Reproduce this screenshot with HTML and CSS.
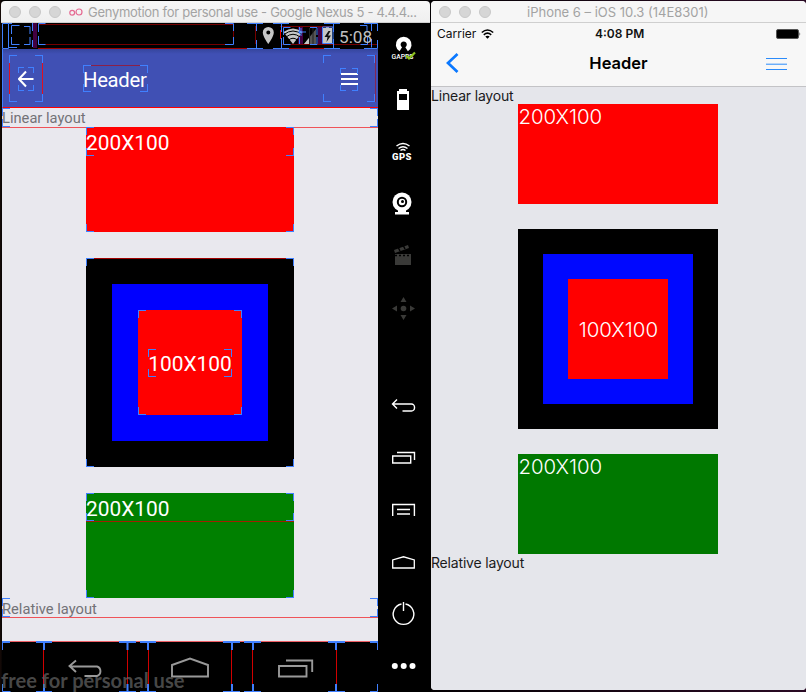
FILE: index.html
```html
<!DOCTYPE html>
<html lang="en">
<head>
<meta charset="utf-8">
<title>Layout comparison</title>
<link rel="stylesheet" href="styles.css">
</head>
<body>
<div class="desktop">
  <section class="window android">
    <header class="titlebar">
      <span class="light"></span><span class="light"></span><span class="light"></span>
      <svg class="geny" width="14" height="16" viewBox="0 0 14 16"><g fill="none" stroke="#e56a92" stroke-width="1.2"><circle cx="3.2" cy="8.8" r="2.4"/><circle cx="10" cy="8" r="3"/></g></svg>
      <span class="caption">Genymotion for personal use - Google Nexus 5 - 4.4.4...</span>
    </header>
    <div class="device">
      <div class="screen">
        <div class="a-status">
          <svg width="376" height="26" viewBox="2 23 376 26">
            <path fill="#420042" d="M33 23h4v25h-4zM298 27h5v17h-5zM318 27h5v17h-5z"/>
            <path fill="#c6c6c6" d="M268.300 27a5.500 5.500 0 0 0-5.500 5.500c0 4.200 5.500 11.500 5.500 11.500s5.500-7.300 5.500-11.500a5.500 5.500 0 0 0-5.500-5.500zm0 3.500a2 2 0 1 1 0 4 2 2 0 0 1 0-4z" fill-rule="evenodd"/>
            <path fill="#c6c6c6" d="M283.500 32q9.500-7 19 0L293 44z"/>
            <g fill="none" stroke="#000"><path d="M284 34.500q9-7 18 0M286 37q7-5.500 14 0M288.500 40q4.500-3.500 9 0"/></g>
            <path fill="#555" d="M304 44l12-15v15z"/><path fill="#c6c6c6" d="M304 44l5-6v6z"/><path stroke="#222" d="M309.500 28v16M313 28v16"/>
            <path fill="#c6c6c6" d="M323 28h3v-1h3v1h3v16h-9z"/><path fill="#111" d="M328.500 31l-4 6h3l-1 5 4.500-6.500h-3l2.500-4.500z"/>
            <g fill="none" stroke="#740000"><path d="M38 24.500h195M38 44.500h195M233.500 25v19M280 26.500h52M255.500 26v18M281 44.500h96"/></g>
            <path d="M8.500 31v9M280.500 30v9" stroke="#e00" fill="none"/>
            <path stroke="#4080ff" fill="none" d="M2.500 23.500h6v25h-6zM9 23.500h3M9 47.500h8M11.500 34v-8.500h8M24 26.500h6V34M11.500 37v7.500h8M24 44.500h6V37M32.500 23v8M32.500 40v7M38.500 32v-8.500h7M38.500 36v8.500h7M225 23.500h8.500V31M225 44.500h8.500V37M247 23.500h16M256.500 23v8M256.500 40v8M247 48.500h16M273 23.500h16M281.500 23v9M281.500 38v10M273 48.500h16M283.500 35v-7.500h7M283.500 37v7.500h7M299.500 27v7M299.500 37v7M310 27.500h7V35M310 44.500h7V37M322.500 27h10.500v16.500h-10.500zM324 23.500h16M333.500 23v9M333.500 39v9M324 48.500h16M360 25.500h7V31M367.500 36v8.500h-7M364 23.500h13.500V31M371.500 23v8M371.500 39v8.500M364 48.500h13.500V40M298 32h8M301 28v8"/>
            <path stroke="#a00000" d="M38 48.500h209M289 48.500h35"/>
          </svg>
          <span class="a-clock">5:08</span>
        </div>
        <div class="a-bar">
          <div class="bounds a-back"><svg width="16" height="25" viewBox="0 0 16 25"><path d="M15.500 13H1.500M8 5.500L1 13 8 20.500" fill="none" stroke="#fff" stroke-width="2"/></svg><i class="glyph-bounds"></i></div>
          <div class="bounds a-title">Header</div>
          <div class="bounds a-menu"><i class="glyph-bounds"></i><svg width="17" height="14" viewBox="0 0 17 14"><path d="M0 3h17M0 8h17M0 13h17" stroke="#fff" stroke-width="2"/></svg></div>
        </div>
        <div class="a-label first bounds">Linear layout</div>
        <div class="bounds a-box red"><span class="bounds a-text">200X100</span></div>
        <div class="bounds a-box a-nest"><div class="a-blue"><div class="bounds a-red"><span class="bounds">100X100</span></div></div></div>
        <div class="bounds a-box green"><span class="bounds a-text">200X100</span></div>
        <div class="a-label bounds">Relative layout</div>
        <div class="a-rest"></div>
        <div class="a-nav">
          <svg width="376" height="51" viewBox="2 641 376 51">
            <path d="M2 641.500h376" stroke="#ef5f65"/>
            <path stroke="#d00000" d="M43.500 650v34M127.500 650v34M148.500 650v34M231.500 650v34M252.500 650v34M336.500 650v34"/>
            <g fill="none" stroke="#999" stroke-width="1.900"><path d="M76 660.500l-6.500 5.500 6.500 6M70 666.500h27a5 5 0 0 1 0 9.500H84.500"/><path d="M172 676.500V665l18-6.500 18 6.500v11.500z"/><path d="M279 666h27.500v10.500H279zM286 660.500h26.200v11.500"/></g>
            <g fill="none" stroke="#4080ff" stroke-width="2"><path d="M2 642h8M36 642h16M119 642h17M140 642h16M223 642h17M244 642h17M328 642h17M370 642h8M44 642v8M127.500 642v8M148 642v8M232 642v8M253 642v8M336 642v8M44 684v8M127.500 684v8M148 684v8M232 684v8M253 684v8M336 684v8"/><path stroke-width="1" d="M2.500 634v16M2.500 684v7.500h8M36 691.500h16M119 691.500h17M140 691.500h16M223 691.500h17M244 691.500h17M328 691.500h17M370 691.500h7.500V684M377.500 642v8"/></g>
          </svg>
          <span class="watermark">free for personal use</span>
        </div>
      </div>
      <nav class="tools">
        <span><svg viewBox="0 0 36 36"><path d="M15.800 18.200a5.500 5.500 0 1 1 5.800 0" fill="none" stroke="#fff" stroke-width="4.800"/><text class="gapps" x="6.500" y="27.500" textLength="22" lengthAdjust="spacingAndGlyphs">GAPPS</text><path d="M21 24.500l3 3 6-6" fill="none" stroke="#8ec41f" stroke-width="2.200"/></svg></span>
        <span><svg viewBox="0 0 36 36"><path fill="#fff" d="M14 6h8v2h2v19H12V8h2z"/><path d="M14 11h8v6h-8z"/></svg></span>
        <span><svg viewBox="0 0 36 36"><path d="M11.500 11q6.500-5 13 0M13.500 13.500q4.500-3.500 9 0M15.500 15.500q2.500-2 5 0" fill="none" stroke="#fff" stroke-width="1.500"/><text class="gps" x="7" y="24.500" textLength="19.500">GPS</text></svg></span>
        <span><svg viewBox="0 0 36 36"><circle cx="17" cy="15" r="9.500" fill="#fff"/><circle cx="17" cy="15" r="4.200" fill="none" stroke="#000" stroke-width="2"/><circle cx="17.500" cy="14.500" r="1.500"/><path fill="#fff" d="M13 23h8v2h3v2.500H10V25h3z"/></svg></span>
        <span><svg viewBox="0 0 36 36"><path fill="#3a3a38" d="M10 15h16v11H10zM9 11l14-5 1 3-14 5z"/><path d="M10 16.500h16" stroke="#000" stroke-dasharray="2 2" stroke-width="1.500"/><path d="M13 8l2 4M18 6l2 4" stroke="#000" stroke-width="1.500"/></svg></span>
        <span><svg viewBox="0 0 36 36"><g fill="#3a3a38"><circle cx="18.500" cy="17.500" r="2.800"/><path d="M18.500 6l3 5h-6zM18.500 29l3-5h-6zM7 17.500l5-3v6zM30 17.500l-5-3v6z"/></g></svg></span>
        <span class="lower"><svg viewBox="0 0 36 36"><path d="M12 12.500L7.500 17l4.500 4.500M8 17h18.500a3 3 0 0 1 3 3v1a3 3 0 0 1-3 3H17.500" fill="none" stroke="#fff" stroke-width="1.400"/></svg></span>
        <span><svg viewBox="0 0 36 36"><path d="M7.700 17h18v7h-18zM12 13.500h17.500V21" fill="none" stroke="#fff" stroke-width="1.400"/></svg></span>
        <span><svg viewBox="0 0 36 36"><path d="M7.700 25V13.500h21.700V25M12 18.500h13M12 23h13" fill="none" stroke="#fff" stroke-width="1.400"/></svg></span>
        <span><svg viewBox="0 0 36 36"><path d="M7.700 25v-8l10.800-3.200L29.300 17v8z" fill="none" stroke="#fff" stroke-width="1.300"/></svg></span>
        <span><svg viewBox="0 0 36 36"><path d="M20.500 9A10.300 10.300 0 1 1 16.500 9M18.500 7v9" fill="none" stroke="#fff" stroke-width="1.400"/></svg></span>
        <span><svg viewBox="0 0 36 36"><g fill="#fff"><circle cx="9.800" cy="19" r="3"/><circle cx="18.700" cy="19" r="3"/><circle cx="27.500" cy="19" r="3"/></g></svg></span>
      </nav>
    </div>
  </section>
  <section class="window ios">
    <header class="titlebar">
      <span class="light"></span><span class="light"></span><span class="light"></span>
      <span class="caption">iPhone 6 – iOS 10.3 (14E8301)</span>
    </header>
    <div class="i-status">
      <span class="carrier">Carrier</span>
      <svg class="wifi" width="13" height="10" viewBox="0 0 13 10"><path d="M.8 3.500q5.700-5 11.400 0M2.800 5.800q3.700-3.200 7.400 0" fill="none" stroke="#000" stroke-width="1.600"/><path d="M4.300 7.500q2.200-1.600 4.400 0L6.500 9.700z"/></svg>
      <span class="i-clock">4:08 PM</span>
      <svg class="battery" width="25" height="10" viewBox="0 0 25 10"><rect x=".5" y=".5" width="22" height="9" rx="1.500" fill="#000" stroke="#555"/><path fill="#333" d="M23.500 3q1.500 2 0 4z"/></svg>
    </div>
    <div class="i-bar">
      <svg width="13" height="20" viewBox="0 0 13 20"><path d="M11.500 1L2 10l9.500 9" fill="none" stroke="#0a78ff" stroke-width="2.700"/></svg>
      <span class="i-title">Header</span>
      <svg class="i-menu" width="21" height="13" viewBox="0 0 21 13"><path d="M0 .5h21M0 6.200h21M0 11.500h21" stroke="#2b8bfa"/></svg>
    </div>
    <main class="i-body">
      <div class="i-label">Linear layout</div>
      <div class="i-box red"><span>200X100</span></div>
      <div class="i-box i-nest"><div class="i-blue"><div class="i-red"><span>100X100</span></div></div></div>
      <div class="i-box i-green"><span>200X100</span></div>
      <div class="i-label">Relative layout</div>
    </main>
  </section>
</div>
</body>
</html>
```
FILE: styles.css
```css
* { box-sizing: border-box; }
body { margin: 0; background: #000; overflow: hidden; }
svg { display: block; flex: none; }
.desktop { display: flex; width: 806px; height: 692px; padding: 1px 0 0 1px; background: linear-gradient(90deg, #170b08, #000 3px 400px, #2a0a24); }
.window { display: flex; flex-direction: column; flex: none; }
.android { width: 429px; }
.ios { width: 375px; height: 689px; margin-left: 1px; background: #f7f7f7; border-radius: 4px; overflow: hidden; }
.titlebar { display: flex; align-items: center; height: 22px; flex: none; padding-left: 8px; background: linear-gradient(#f7f7f7, #efefef); border-bottom: 1px solid #cfcfcf; border-radius: 4px 4px 0 0; font: 13px Inter, sans-serif; color: #a3a3a3; white-space: nowrap; }
.light { width: 12px; height: 12px; margin-right: 8px; border-radius: 50%; background: #d6d6d6; border: 1px solid #c8c8c8; }
.android .caption { margin-left: 5px; letter-spacing: -0.29px; }
.ios .titlebar { background: #f6f6f6; }
.ios .caption { margin-left: 28px; }
.device { display: flex; flex: none; height: 669px; }
.screen { display: flex; flex-direction: column; width: 376px; margin-left: 1px; background: #e9e8ee; font-family: Roboto, sans-serif; }

.bounds { position: relative; --c: #4080ff; --n: 8px; }
.bounds::after, .glyph-bounds {
  content: ""; position: absolute; inset: 0;
  background:
    linear-gradient(var(--c), var(--c)) 0 0 / var(--n) 1px,
    linear-gradient(var(--c), var(--c)) 0 0 / 1px var(--n),
    linear-gradient(var(--c), var(--c)) 100% 0 / var(--n) 1px,
    linear-gradient(var(--c), var(--c)) 100% 0 / 1px var(--n),
    linear-gradient(var(--c), var(--c)) 0 100% / var(--n) 1px,
    linear-gradient(var(--c), var(--c)) 0 100% / 1px var(--n),
    linear-gradient(var(--c), var(--c)) 100% 100% / var(--n) 1px,
    linear-gradient(var(--c), var(--c)) 100% 100% / 1px var(--n);
  background-repeat: no-repeat;
}
.a-status { position: relative; height: 26px; flex: none; background: #000; }
.a-clock { position: absolute; left: 337px; top: 4px; font-size: 17.2px; line-height: 20px; color: #c0c0c0; }
.a-bar { display: flex; align-items: center; height: 59px; flex: none; padding: 0 2px 0 6px; background: linear-gradient(#35459c, #4050b4 5px); border-bottom: 1px solid #f00; border-left: 1px solid #4080ff; color: #fff; }
.a-back { display: flex; align-items: center; justify-content: center; width: 34px; height: 47px; border-right: 1px solid #e01020; border-left: 1px solid #e01020; }
.a-back::after { inset: 0 -1px; }
.glyph-bounds { inset: 12px 8px 11px; --n: 6px; }
.a-title { width: 65px; height: 27px; margin-left: 40px; border-top: 1px solid #8a2048; font-size: 20.3px; line-height: 28px; letter-spacing: -0.3px; }
.a-title::after { inset: -1px 0 0; }
.a-menu { display: flex; align-items: center; justify-content: center; width: 53px; height: 47px; margin-left: auto; border-right: 1px solid #852650; }
.a-menu .glyph-bounds { inset: 13px 17px 11px; }
.a-label { height: 19px; flex: none; border-bottom: 1px solid #ef5359; font-size: 14.7px; line-height: 21px; color: #737277; white-space: nowrap; }
.a-label.first { height: 20px; margin-bottom: -1px; }
.a-box { width: 208px; height: 105px; flex: none; margin: 0 auto 26px 84px; color: #fff; font-size: 20.9px; }
.red { background: #f00; }
.green { background: #008000; margin-bottom: 0; }
.a-text { display: block; height: 29px; line-height: 33px; }
.green .a-text { border-bottom: 1px solid #a02000; }
.a-nest { display: flex; align-items: center; justify-content: center; height: 209px; background: #000; box-shadow: inset 0 1px #a00000; }
.a-blue { display: flex; align-items: center; justify-content: center; width: 156px; height: 157px; background: #00f; }
.a-red { display: flex; align-items: center; justify-content: center; width: 104px; height: 105px; background: #f00; }
.a-red span { height: 28px; line-height: 31px; }
.a-label:not(.first) { height: 20px; line-height: 22px; }
.a-rest { height: 23px; flex: none; }
.a-nav { position: relative; height: 51px; flex: none; background: #000; }
.watermark { position: absolute; left: -1px; top: 26px; font: 700 20.1px/26px Lato, sans-serif; color: rgba(100, 100, 100, .72); white-space: nowrap; }

.tools { width: 53px; flex: none; display: flex; flex-direction: column; align-items: center; padding-right: 4px; background: #000; }
.tools span { display: flex; align-items: center; height: 52px; flex: none; }
.tools svg { width: 36px; height: 36px; }
.tools .lower { margin-top: 44px; }
.gapps { font: 500 7.5px Roboto, sans-serif; fill: #fff; }
.gps { font: 900 9.5px Roboto, sans-serif; fill: #fff; }

.i-status { display: flex; align-items: center; height: 21px; flex: none; padding: 0 5px 0 6px; font: 12px Inter, sans-serif; color: #111; }
.carrier { width: 44px; }
.i-clock { margin-left: 101px; font-weight: 600; }
.battery { margin-left: auto; }
.i-bar { display: grid; grid-template-columns: 21px 1fr 21px; align-items: center; height: 43px; flex: none; padding: 0 19px 5px 15px; border-bottom: 1px solid #c3c3c6; }
.i-title { padding-left: 4px; text-align: center; font: 600 16.5px Inter, sans-serif; color: #000; }
.i-menu { margin-top: 3px; }
.i-body { flex: 1; background: #e5e6eb; font-family: Inter, sans-serif; }
.i-label { height: 17px; font-size: 14px; line-height: 18px; letter-spacing: -0.18px; color: #1a1a1c; }
.i-box { width: 200px; height: 100px; margin: 0 0 25px 87.4px; font-size: 20.4px; line-height: 26px; color: #fff; font-weight: 300; }
.i-nest { display: flex; align-items: center; justify-content: center; height: 200px; background: #000; }
.i-blue { display: flex; align-items: center; justify-content: center; width: 150px; height: 150px; background: #0008ff; }
.i-red { display: flex; align-items: center; justify-content: center; width: 100px; height: 100px; background: #f00; }
.i-red span { padding-top: 2px; }
.i-green { margin-bottom: 0; background: #007800; }
```
